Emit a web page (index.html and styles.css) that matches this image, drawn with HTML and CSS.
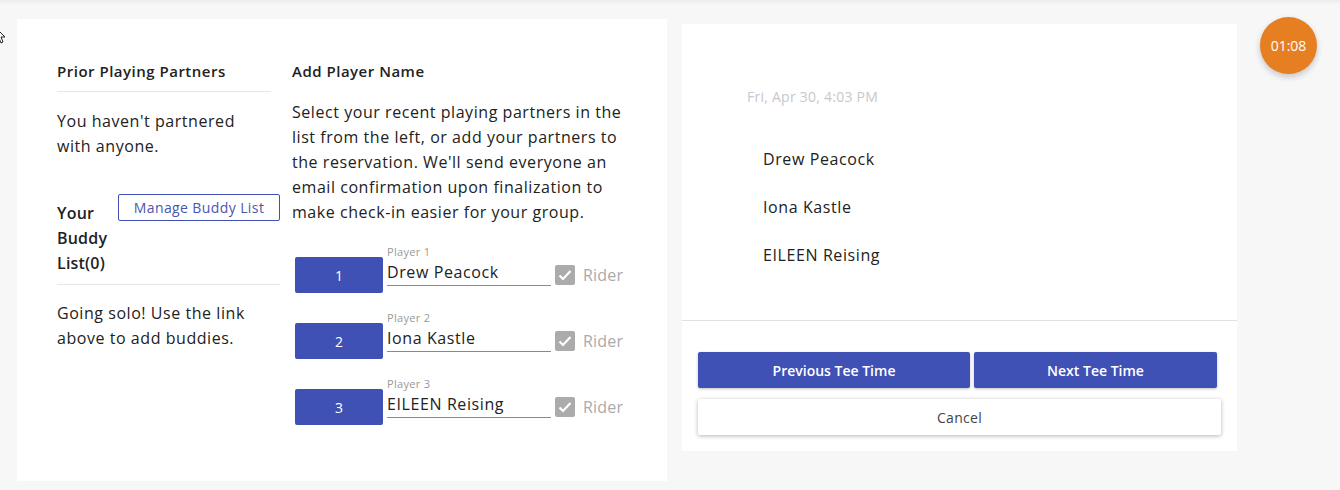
FILE: index.html
```html
<!DOCTYPE html>
<html>
<head>
<meta charset="utf-8">
<link rel="stylesheet" href="styles.css">
</head>
<body>
<div class="topbar"></div>
<div class="page">
  <div class="card left-card">
    <div class="col col-partners">
      <h3 class="heading heading-rule">Prior Playing Partners</h3>
      <p class="text">You haven't partnered with anyone.</p>
      <div class="buddy-head">
        <h3 class="heading buddy-title">Your Buddy List(0)</h3>
        <button class="outline-btn">Manage Buddy List</button>
      </div>
      <div class="rule"></div>
      <p class="text">Going solo! Use the link above to add buddies.</p>
    </div>
    <div class="col col-players">
      <h3 class="heading">Add Player Name</h3>
      <p class="text intro">Select your recent playing partners in the list from the left, or add your partners to the reservation. We'll send everyone an email confirmation upon finalization to make check-in easier for your group.</p>
      <div class="players">
        <div class="player-row">
          <button class="num-btn">1</button>
          <div class="field">
            <span class="field-label">Player 1</span>
            <span class="field-input">Drew Peacock</span>
          </div>
          <span class="check"><svg viewBox="0 0 20 20" width="20" height="20"><path d="M4.5 10.5l3.5 3.5 7.5-8" fill="none" stroke="#fff" stroke-width="2.2"/></svg></span>
          <span class="rider">Rider</span>
        </div>
        <div class="player-row">
          <button class="num-btn">2</button>
          <div class="field">
            <span class="field-label">Player 2</span>
            <span class="field-input">Iona Kastle</span>
          </div>
          <span class="check"><svg viewBox="0 0 20 20" width="20" height="20"><path d="M4.5 10.5l3.5 3.5 7.5-8" fill="none" stroke="#fff" stroke-width="2.2"/></svg></span>
          <span class="rider">Rider</span>
        </div>
        <div class="player-row">
          <button class="num-btn">3</button>
          <div class="field">
            <span class="field-label">Player 3</span>
            <span class="field-input">EILEEN Reising</span>
          </div>
          <span class="check"><svg viewBox="0 0 20 20" width="20" height="20"><path d="M4.5 10.5l3.5 3.5 7.5-8" fill="none" stroke="#fff" stroke-width="2.2"/></svg></span>
          <span class="rider">Rider</span>
        </div>
      </div>
    </div>
  </div>
  <div class="card right-card">
    <div class="summary">
      <div class="date">Fri, Apr 30, 4:03 PM</div>
      <ul class="names">
        <li>Drew Peacock</li>
        <li>Iona Kastle</li>
        <li>EILEEN Reising</li>
      </ul>
    </div>
    <div class="actions">
      <div class="nav-btns">
        <button class="fill-btn prev">Previous Tee Time</button>
        <button class="fill-btn next">Next Tee Time</button>
      </div>
      <button class="cancel-btn">Cancel</button>
    </div>
  </div>
</div>
<div class="timer">01:08</div>
<svg class="cursor" viewBox="0 0 12 18" width="12" height="18"><path d="M1 1v13l3-3 2 5 2-1-2-5h4z" fill="#fff" stroke="#222" stroke-width="1"/></svg>
</body>
</html>
```
FILE: styles.css
```css
* { box-sizing: border-box; }
html, body { margin: 0; padding: 0; }
body {
  width: 1340px;
  height: 490px;
  background: #f7f7f7;
  font-family: "Open Sans", "Liberation Sans", sans-serif;
  color: #222;
  overflow: hidden;
  position: relative;
}
.topbar {
  height: 0;
  box-shadow: 0 0 4px 1px rgba(0,0,0,0.12);
}
.page {
  display: flex;
  align-items: flex-start;
  padding: 19px 0 0 17px;
  gap: 15px;
}
.card { background: #fff; }
.left-card {
  width: 650px;
  height: 462px;
  display: flex;
  padding: 42px 0 0 40px;
  gap: 12px;
}
.col-partners { width: 223px; }
.col-players { width: 340px; }
.heading {
  margin: 0;
  font-size: 15px;
  font-weight: 600;
  line-height: 20px;
  letter-spacing: 0.5px;
  color: #222;
}
.heading-rule {
  width: 214px;
  padding-bottom: 10px;
  border-bottom: 1px solid #e6e6e6;
}
.text {
  margin: 0;
  font-size: 16px;
  line-height: 25px;
  letter-spacing: 0.55px;
  color: #222;
}
.col-partners .text { margin-top: 17px; max-width: 214px; }
.buddy-head {
  display: flex;
  align-items: flex-start;
  margin-top: 42px;
}
.buddy-title {
  width: 61px;
  line-height: 25px;
  font-size: 16px;
  letter-spacing: 0.2px;
}
.outline-btn {
  margin-top: -7px;
  width: 162px;
  height: 27px;
  border: 1px solid #3f51b5;
  border-radius: 2px;
  background: #fff;
  color: #4a56b0;
  font-family: inherit;
  font-size: 14px;
  letter-spacing: 0.4px;
  padding: 0;
}
.rule {
  margin-top: 8px;
  border-top: 1px solid #e6e6e6;
}
.col-partners .rule + .text { margin-top: 16px; }
.intro { margin-top: 19px; }
.players {
  margin-top: 20px;
  display: flex;
  flex-direction: column;
  gap: 18px;
}
.player-row {
  display: flex;
  align-items: flex-start;
}
.num-btn {
  margin: 12px 4px 0 3px;
  width: 88px;
  height: 36px;
  border: 0;
  border-radius: 2px;
  background: #3f51b5;
  color: #fff;
  font-family: inherit;
  font-size: 14px;
  font-weight: 500;
  padding: 0;
}
.field {
  width: 164px;
  display: flex;
  flex-direction: column;
}
.field-label {
  font-size: 11px;
  line-height: 13px;
  letter-spacing: 0.3px;
  color: #999;
}
.field-input {
  padding-top: 2px;
  font-size: 16px;
  line-height: 25px;
  letter-spacing: 0.6px;
  color: #222;
  border-bottom: 1px solid #8a8a8a;
}
.check {
  margin: 20px 0 0 4px;
  width: 20px;
  height: 20px;
  background: #ababab;
  border-radius: 2px;
  display: flex;
}
.rider {
  margin: 18px 0 0 8px;
  font-size: 16px;
  line-height: 24px;
  letter-spacing: 0.2px;
  color: #aaa;
}
.right-card {
  margin-top: 5px;
  width: 555px;
  height: 427px;
  display: flex;
  flex-direction: column;
}
.summary {
  height: 297px;
  border-bottom: 1px solid #e0e0e0;
  padding: 63px 0 0 65px;
}
.date {
  font-size: 14px;
  line-height: 20px;
  letter-spacing: 0.25px;
  color: #c8c8c8;
}
.names {
  list-style: none;
  margin: 40px 0 0 16px;
  padding: 0;
  display: flex;
  flex-direction: column;
  gap: 24px;
}
.names li {
  font-size: 16px;
  line-height: 24px;
  letter-spacing: 0.6px;
  color: #222;
}
.actions {
  padding: 31px 16px 16px 16px;
  display: flex;
  flex-direction: column;
  gap: 11px;
}
.nav-btns {
  display: flex;
  gap: 4px;
}
.fill-btn {
  height: 36px;
  border: 0;
  border-radius: 2px;
  background: #3f51b5;
  color: #fff;
  font-family: inherit;
  font-size: 14px;
  font-weight: 600;
  box-shadow: 0 1px 3px rgba(0,0,0,0.25);
  padding: 0;
}
.prev { width: 272px; }
.next { width: 243px; }
.cancel-btn {
  width: 523px;
  height: 36px;
  border: 0;
  border-radius: 2px;
  background: #fff;
  color: #444;
  font-family: inherit;
  font-size: 14px;
  letter-spacing: 0.3px;
  box-shadow: 0 1px 4px rgba(0,0,0,0.3);
  padding: 0;
}
.timer {
  position: absolute;
  left: 1260px;
  top: 17px;
  width: 57px;
  height: 57px;
  border-radius: 50%;
  background: #e67e22;
  color: #fff;
  font-size: 14px;
  font-weight: 500;
  display: flex;
  align-items: center;
  justify-content: center;
  box-shadow: 0 3px 6px rgba(0,0,0,0.2);
}
.cursor {
  position: absolute;
  left: -5px;
  top: 27px;
}
```
